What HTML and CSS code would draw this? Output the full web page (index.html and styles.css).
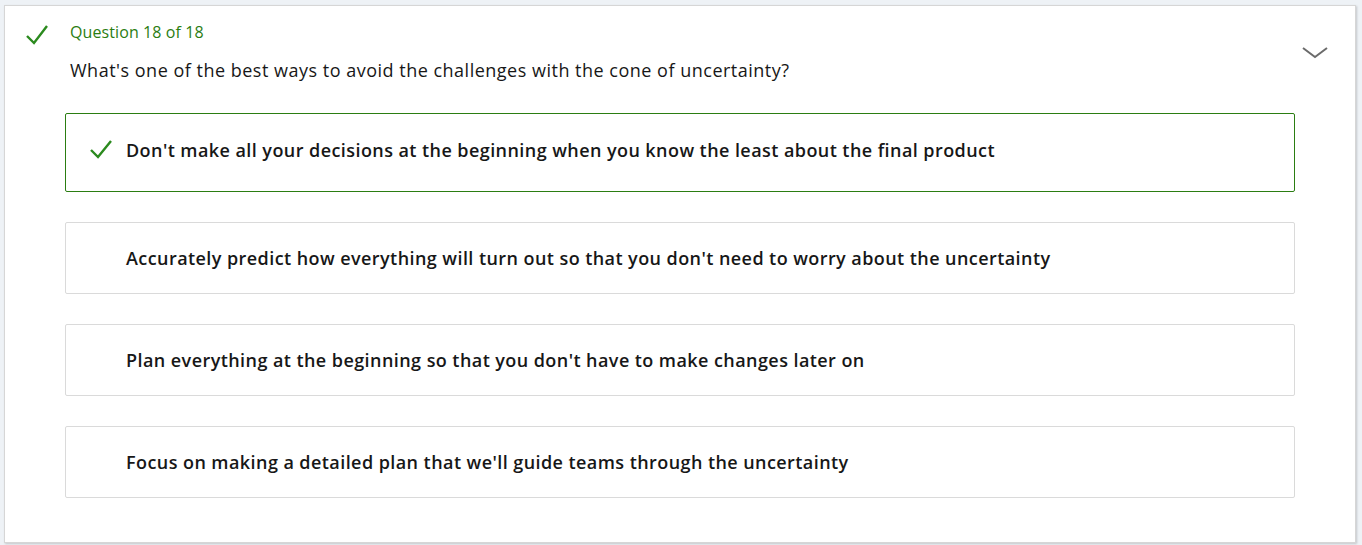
FILE: index.html
```html
<!DOCTYPE html>
<html>
<head>
<meta charset="utf-8">
<link rel="stylesheet" href="styles.css">
</head>
<body>
<div class="card">
  <div class="head">
    <svg class="head-check" width="22" height="20" viewBox="0 0 22 20"><path d="M1 11 L8 18 L21 1" fill="none" stroke="#2b8a1e" stroke-width="2.4"/></svg>
    <div class="head-text">
      <div class="label">Question 18 of 18</div>
      <div class="question">What's one of the best ways to avoid the challenges with the cone of uncertainty?</div>
    </div>
    <svg class="chevron" width="26" height="12" viewBox="0 0 26 12"><path d="M1 1 L13 10 L25 1" fill="none" stroke="#6b6b6b" stroke-width="2"/></svg>
  </div>
  <div class="options">
    <div class="option correct">
      <svg class="opt-check" width="22" height="19" viewBox="0 0 22 19"><path d="M1 10 L8 17 L21 1" fill="none" stroke="#2b8a1e" stroke-width="2.4"/></svg>
      <span class="opt-text">Don't make all your decisions at the beginning when you know the least about the final product</span>
    </div>
    <div class="option">
      <span class="opt-text">Accurately predict how everything will turn out so that you don't need to worry about the uncertainty</span>
    </div>
    <div class="option">
      <span class="opt-text">Plan everything at the beginning so that you don't have to make changes later on</span>
    </div>
    <div class="option">
      <span class="opt-text">Focus on making a detailed plan that we'll guide teams through the uncertainty</span>
    </div>
  </div>
</div>
</body>
</html>
```
FILE: styles.css
```css
html, body {
  margin: 0;
  padding: 0;
  background: #eef2f6;
}
body {
  padding: 5px 6px 2px 4px;
  font-family: "Open Sans", "Noto Sans", sans-serif;
  color: #171717;
}
.card {
  background: #fff;
  border: 1px solid #d6d6d6;
  box-shadow: 1px 1px 2px rgba(0,0,0,0.18);
  height: 538px;
  box-sizing: border-box;
  padding: 0 60px 0 60px;
}
.head {
  display: flex;
  position: relative;
  margin-left: -39px;
  padding-top: 16px;
}
.head-check {
  margin-top: 3px;
  margin-right: 22px;
  flex: none;
}
.head-text {
  flex: 1;
}
.label {
  color: #2b7d12;
  font-size: 16px;
  line-height: 20px;
  letter-spacing: 0.1px;
}
.question {
  font-size: 18px;
  line-height: 24px;
  margin-top: 16px;
  letter-spacing: 0.5px;
}
.chevron {
  position: absolute;
  right: -33px;
  top: 41px;
}
.options {
  display: flex;
  flex-direction: column;
  gap: 30px;
  margin-top: 31px;
}
.option {
  border: 1px solid #dadada;
  border-radius: 2px;
  height: 72px;
  box-sizing: border-box;
  display: flex;
  align-items: center;
  padding-left: 60px;
  font-weight: 600;
  font-size: 18px;
  letter-spacing: 0.43px;
}
.option.correct {
  border-color: #2b7d12;
  height: 79px;
  padding-left: 24px;
  padding-bottom: 6px;
}
.opt-check {
  margin-right: 14px;
  flex: none;
}
```
